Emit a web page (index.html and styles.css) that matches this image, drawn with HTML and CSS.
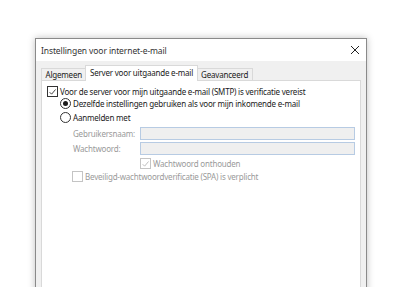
FILE: index.html
```html
<!DOCTYPE html>
<html>
<head>
<meta charset="utf-8">
<link rel="stylesheet" href="styles.css">
</head>
<body>
<div class="dialog">
  <div class="titlebar">
    <span class="title">Instellingen voor internet-e-mail</span>
    <svg class="close" width="10" height="10" viewBox="0 0 10 10"><path d="M1 1 L9 9 M9 1 L1 9" stroke="#222" stroke-width="1" fill="none"/></svg>
  </div>
  <div class="body">
    <div class="tabs">
      <div class="tab">Algemeen</div>
      <div class="tab active">Server voor uitgaande e-mail</div>
      <div class="tab">Geavanceerd</div>
    </div>
    <div class="panel">
      <div class="row r1">
        <span class="check on"><svg width="10" height="10" viewBox="0 0 10 10"><path d="M1.8 5.2 L4 7.4 L8.4 2.2" stroke="#333" stroke-width="1" fill="none"/></svg></span>
        <span>Voor de server voor mijn uitgaande e-mail (SMTP) is verificatie vereist</span>
      </div>
      <div class="row r2">
        <span class="radio on"></span>
        <span>Dezelfde instellingen gebruiken als voor mijn inkomende e-mail</span>
      </div>
      <div class="row r3">
        <span class="radio"></span>
        <span>Aanmelden met</span>
      </div>
      <div class="field f1">
        <span class="label">Gebruikersnaam:</span>
        <span class="input"></span>
      </div>
      <div class="field f2">
        <span class="label">Wachtwoord:</span>
        <span class="input"></span>
      </div>
      <div class="row r4 disabled">
        <span class="check dis"><svg width="10" height="10" viewBox="0 0 10 10"><path d="M1.8 5.2 L4 7.4 L8.4 2.2" stroke="#b8b8b8" stroke-width="1" fill="none"/></svg></span>
        <span>Wachtwoord onthouden</span>
      </div>
      <div class="row r5 disabled">
        <span class="check dis"></span>
        <span>Beveiligd-wachtwoordverificatie (SPA) is verplicht</span>
      </div>
    </div>
  </div>
</div>
</body>
</html>
```
FILE: styles.css
```css
html, body {
  margin: 0;
  padding: 0;
  background: #ffffff;
  overflow: hidden;
  width: 400px;
  height: 287px;
}
body {
  font-family: "Noto Sans", "Open Sans", sans-serif;
  font-size: 8px;
  letter-spacing: -0.2px;
  color: #1a1a1a;
}
.dialog {
  margin-left: 35px;
  margin-top: 38px;
  width: 330px;
  height: 260px;
  border: 1px solid #8a8a8a;
  box-shadow: 0 0 7px rgba(0,0,0,0.25);
  display: flex;
  flex-direction: column;
  background: #f0f0f0;
}
.titlebar {
  height: 22px;
  background: #ffffff;
  display: flex;
  align-items: center;
  justify-content: space-between;
  padding: 0 6px 0 5px;
}
.title {
  font-size: 8.5px;
  letter-spacing: -0.1px;
  color: #333;
}
.close { display: block; }
.body {
  flex: 1;
  display: flex;
  flex-direction: column;
  padding: 4px 5px 0 5px;
}
.tabs {
  display: flex;
  align-items: flex-end;
  height: 15px;
  position: relative;
  z-index: 1;
}
.tab {
  height: 11px;
  line-height: 11px;
  padding: 0 3.5px;
  background: #f0f0f0;
  border: 1px solid #d9d9d9;
  border-bottom: none;
  margin-right: -1px;
  color: #1a1a1a;
}
.tab.active {
  height: 15px;
  line-height: 13px;
  background: #ffffff;
  margin-bottom: -1px;
}
.panel {
  flex: 1;
  background: #ffffff;
  border: 1px solid #d9d9d9;
  display: flex;
  flex-direction: column;
  padding: 5px 0 0 5px;
}
.row {
  display: flex;
  align-items: center;
  height: 11px;
  gap: 2px;
}
.r2, .r3 { padding-left: 13px; }
.r2 { margin-top: 1px; }
.r3 { margin-top: 3px; }
.check {
  width: 9px;
  height: 9px;
  border: 1px solid #333;
  background: #fff;
  display: flex;
  align-items: center;
  justify-content: center;
  flex: none;
}
.check svg { display: block; }
.check.dis { border-color: #c4c4c4; }
.radio {
  width: 9px;
  height: 9px;
  border: 1px solid #333;
  border-radius: 50%;
  background: #fff;
  flex: none;
  position: relative;
}
.radio.on::after {
  content: "";
  position: absolute;
  left: 2px;
  top: 2px;
  width: 5px;
  height: 5px;
  border-radius: 50%;
  background: #1a1a1a;
}
.field {
  display: flex;
  align-items: center;
  padding-left: 26px;
  height: 13px;
}
.f1 { margin-top: 4px; }
.f2 { margin-top: 2px; }
.label {
  width: 67px;
  color: #9a9a9a;
}
.input {
  width: 213px;
  height: 11px;
  border: 1px solid #b7cbe3;
  background: #efefef;
}
.disabled { color: #9a9a9a; }
.r4 { padding-left: 93px; margin-top: 3px; }
.r5 { padding-left: 25px; margin-top: 2px; }
```
